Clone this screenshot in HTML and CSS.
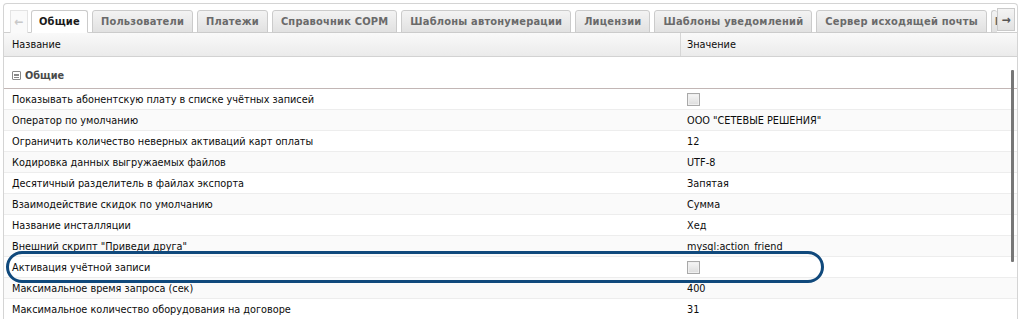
FILE: index.html
```html
<!DOCTYPE html>
<html lang="ru">
  <head>
    <meta charset="UTF-8" />
    <title>Настройки</title>
    <link rel="stylesheet" href="styles.css">
  </head>
  <body>
    <div class="panel">
      <div class="tabbar">
        <div class="scroller left">&#8592;</div>
        <div class="tabs">
          <div class="tab active">Общие</div>
          <div class="tab">Пользователи</div>
          <div class="tab">Платежи</div>
          <div class="tab">Справочник СОРМ</div>
          <div class="tab">Шаблоны автонумерации</div>
          <div class="tab">Лицензии</div>
          <div class="tab">Шаблоны уведомлений</div>
          <div class="tab">Сервер исходящей почты</div>
          <div class="tab last">В</div>
        </div>
        <div class="scroller right">&#8594;</div>
      </div>

      <div class="grid">
        <div class="head">
          <div class="cell name">Название</div>
          <div class="cell value">Значение</div>
        </div>

        <div class="body">
          <div class="group"><span class="toggle"></span>Общие</div>

          <div class="row">
            <div class="cell name">Показывать абонентскую плату в списке учётных записей</div>
            <div class="cell value"><span class="check"></span></div>
          </div>
          <div class="row alt">
            <div class="cell name">Оператор по умолчанию</div>
            <div class="cell value">ООО "СЕТЕВЫЕ РЕШЕНИЯ"</div>
          </div>
          <div class="row">
            <div class="cell name">Ограничить количество неверных активаций карт оплаты</div>
            <div class="cell value">12</div>
          </div>
          <div class="row alt">
            <div class="cell name">Кодировка данных выгружаемых файлов</div>
            <div class="cell value">UTF-8</div>
          </div>
          <div class="row">
            <div class="cell name">Десятичный разделитель в файлах экспорта</div>
            <div class="cell value">Запятая</div>
          </div>
          <div class="row alt">
            <div class="cell name">Взаимодействие скидок по умолчанию</div>
            <div class="cell value">Сумма</div>
          </div>
          <div class="row">
            <div class="cell name">Название инсталляции</div>
            <div class="cell value">Хед</div>
          </div>
          <div class="row alt">
            <div class="cell name">Внешний скрипт "Приведи друга"</div>
            <div class="cell value">mysql:action_friend</div>
          </div>
          <div class="row">
            <div class="cell name">Активация учётной записи</div>
            <div class="cell value"><span class="check"></span></div>
          </div>
          <div class="row alt">
            <div class="cell name">Максимальное время запроса (сек)</div>
            <div class="cell value">400</div>
          </div>
          <div class="row">
            <div class="cell name">Максимальное количество оборудования на договоре</div>
            <div class="cell value">31</div>
          </div>

          <div class="scroll-thumb"></div>
          <div class="mark"></div>
        </div>
      </div>
    </div>
  </body>
</html>
```

FILE: styles.css
```css
* {
  margin: 0;
  padding: 0;
  box-sizing: border-box;
}

html,
body {
  background: #fff;
  font-family: "DejaVu Sans Condensed", "DejaVu Sans", sans-serif;
  font-stretch: condensed;
  font-size: 10.8px;
  color: #0c0c0c;
}

body {
  padding: 3px 0 0 3px;
  height: 319px;
  overflow: hidden;
}

.panel {
  width: 1015px;
  border: 1px solid #d4d4d4;
  border-bottom: none;
  border-radius: 4px 4px 0 0;
}

/* tab strip */
.tabbar {
  display: flex;
  align-items: flex-end;
  height: 29px;
  padding: 0 2px 0 6px;
  border-bottom: 1px solid #cfcfcf;
}

.scroller {
  width: 18px;
  height: 23px;
  display: flex;
  align-items: center;
  justify-content: center;
  font-size: 12px;
  font-weight: bold;
  margin-bottom: -1px;
}

.scroller.left {
  color: #c8c8c8;
  background: #fafafa;
  border: 1px solid #e4e4e4;
  border-bottom: none;
  margin-right: 3px;
}

.scroller.right {
  color: #555;
  background: linear-gradient(#f4f4f4, #e2e2e2);
  border: 1px solid #cacaca;
  margin-bottom: 1px;
}

.tabs {
  flex: 1;
  display: flex;
  gap: 4px;
  overflow: hidden;
  white-space: nowrap;
  margin-bottom: -1px;
}

.tab {
  flex: none;
  height: 23px;
  padding: 0 8px;
  display: flex;
  align-items: center;
  font-size: 11px;
  font-weight: bold;
  letter-spacing: 0.2px;
  color: #6a6a6a;
  background: linear-gradient(#f3f3f3, #e1e1e1);
  border: 1px solid #cbcbcb;
  border-radius: 3px 3px 0 0;
}

.tab.active {
  padding: 0 7px;
  color: #1a1a1a;
  background: #fff;
  border-bottom-color: #fff;
}

.tab.last {
  flex: 1;
  min-width: 0;
  padding: 0 0 0 3px;
  border-right: none;
}

/* grid */
.grid {
  position: relative;
}

.head {
  display: flex;
  height: 24px;
  background: linear-gradient(#f9f9f9, #ebebeb);
  border-bottom: 1px solid #d2d2d2;
}

.head .cell {
  display: flex;
  align-items: center;
}

.head .name {
  border-right: 1px solid #d6d6d6;
}

.cell.name {
  width: 677px;
  padding-left: 8px;
  flex: none;
}

.cell.value {
  flex: 1;
  padding-left: 6px;
}

.body {
  position: relative;
}

.group {
  height: 32px;
  display: flex;
  align-items: flex-end;
  padding: 0 0 6px 8px;
  border-bottom: 1px solid #c2b6b5;
  font-weight: bold;
  color: #4a4a4a;
}

.toggle {
  width: 9px;
  height: 9px;
  margin: 0 4px 2px 0;
  border: 1px solid #888;
  border-radius: 1px;
  background: linear-gradient(#888, #888) center / 5px 1px no-repeat,
    linear-gradient(#888, #888) center 2px / 5px 1px no-repeat,
    linear-gradient(#888, #888) center 5px / 5px 1px no-repeat;
}

.row {
  display: flex;
  align-items: center;
  height: 21px;
  border-bottom: 1px solid #ededed;
}

.row.alt {
  background: #fafafa;
}

.check {
  display: block;
  width: 13px;
  height: 13px;
  border: 1px solid #a9a9a9;
  background: linear-gradient(#f7f7f7, #dcdcdc);
  box-shadow: inset 0 0 0 1px #efefef;
}

.scroll-thumb {
  position: absolute;
  left: 1007px;
  top: 13px;
  width: 3px;
  height: 192px;
  background: #777;
  border-radius: 1px;
}

.mark {
  position: absolute;
  left: 2px;
  top: 194px;
  width: 818px;
  height: 32px;
  border: 3.5px solid #10497c;
  border-radius: 16px;
}
```
